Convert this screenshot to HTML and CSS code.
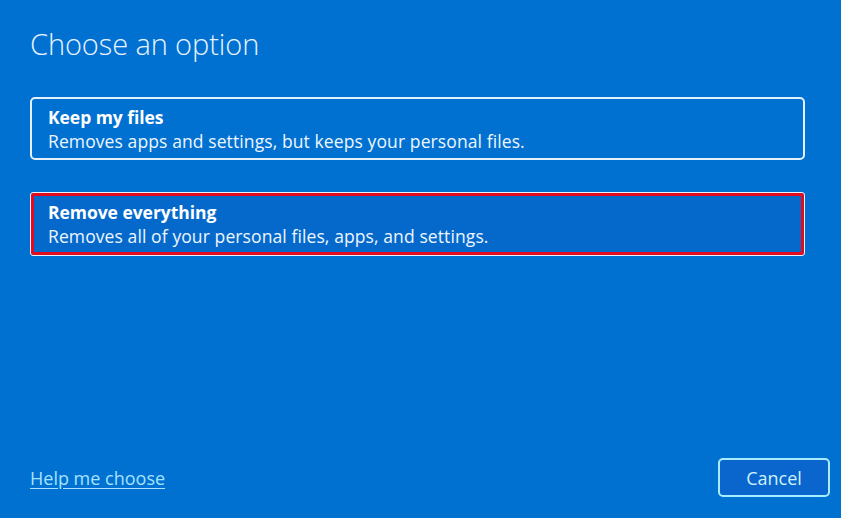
FILE: index.html
```html
<!DOCTYPE html>
<html lang="en">
<head>
<meta charset="utf-8">
<title>Choose an option</title>
<link rel="stylesheet" href="styles.css">
</head>
<body>
<main class="screen">
  <h1 class="title">Choose an option</h1>
  <div class="options">
    <button class="option">
      <span class="option-title">Keep my files</span>
      <span class="option-desc">Removes apps and settings, but keeps your personal files.</span>
    </button>
    <button class="option option-selected">
      <span class="option-title">Remove everything</span>
      <span class="option-desc">Removes all of your personal files, apps, and settings.</span>
    </button>
  </div>
  <footer class="footer">
    <a class="help" href="#">Help me choose</a>
    <button class="cancel">Cancel</button>
  </footer>
</main>
</body>
</html>
```
FILE: styles.css
```css
html, body {
  margin: 0;
  height: 100%;
  background: #0071d1;
}
body {
  font-family: "Open Sans", "Noto Sans", "Liberation Sans", sans-serif;
  color: #ffffff;
}
.screen {
  height: 100%;
  box-sizing: border-box;
  padding: 23px 11px 21px 30px;
  display: flex;
  flex-direction: column;
}
.title {
  margin: 0;
  font-weight: 300;
  font-size: 29px;
  line-height: 42px;
  color: #e8f3ff;
  letter-spacing: -0.1px;
}
.options {
  display: flex;
  flex-direction: column;
  gap: 32px;
  margin-top: 32px;
  margin-right: 25px;
}
.option {
  display: flex;
  flex-direction: column;
  align-items: flex-start;
  box-sizing: border-box;
  height: 63px;
  padding: 6px 16px;
  border: 2px solid #e4f0fb;
  border-radius: 5px;
  background: transparent;
  font-family: inherit;
  color: #ffffff;
  text-align: left;
  cursor: pointer;
}
.option-title {
  font-weight: 700;
  font-size: 17.5px;
  line-height: 24px;
  letter-spacing: -0.05px;
}
.option-desc {
  font-size: 17.5px;
  line-height: 24px;
  color: #eef6ff;
  letter-spacing: 0.1px;
}
.option-selected {
  height: 64px;
  border: 1px solid #e4f0fb;
  box-shadow: inset 0 0 0 3px #e30a1e;
  border-radius: 3px;
  padding-top: 7px;
  padding-left: 17px;
  background: #0569cc;
}
.footer {
  margin-top: auto;
  display: flex;
  justify-content: space-between;
  align-items: center;
}
.help {
  font-size: 18px;
  color: #a6e2ff;
  text-decoration: underline;
  text-underline-offset: 3px;
}
.cancel {
  width: 112px;
  height: 39px;
  border: 2px solid #a8ecff;
  border-radius: 5px;
  background: #0a66cc;
  color: #cdf1ff;
  font-family: inherit;
  font-size: 18px;
  cursor: pointer;
}
```
